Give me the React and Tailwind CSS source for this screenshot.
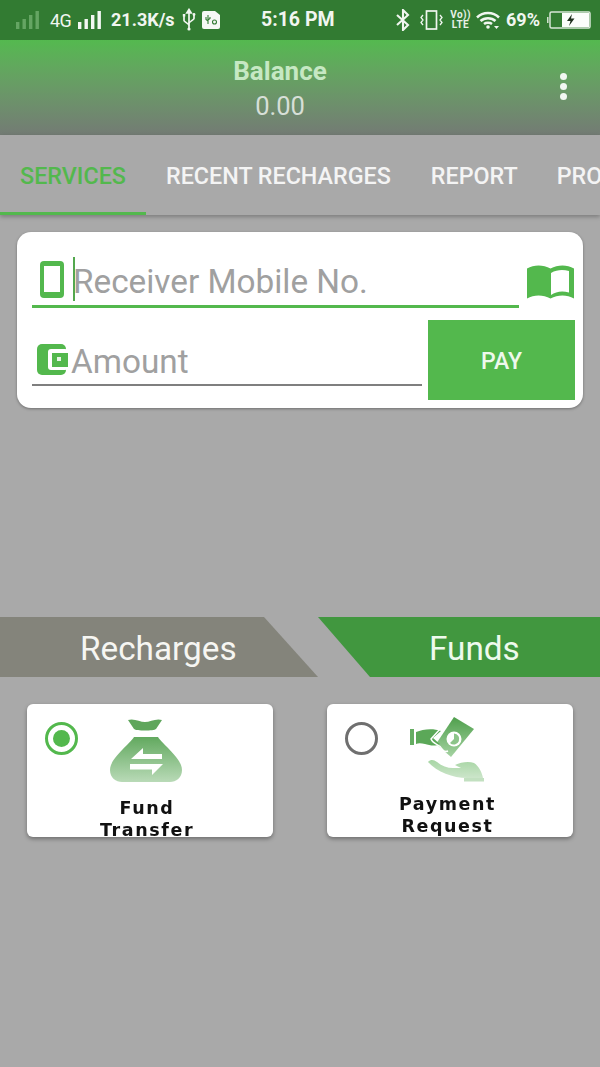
import React from "react";

const G = "#53b84d";

function Bars({ dim }) {
  return (
    <svg width="25" height="20" viewBox="0 0 25 20" className="shrink-0">
      <g fill={dim ? "#8fc98c" : "#f4f8f3"} opacity={dim ? 0.55 : 1}>
        <rect x="1" y="12" width="3.4" height="7" />
        <rect x="7.5" y="9" width="3.4" height="10" />
        <rect x="14" y="5" width="3.4" height="14" />
        <rect x="20.5" y="1" width="3.4" height="18" />
      </g>
    </svg>
  );
}

function StatusBar() {
  return (
    <div className="h-10 bg-[#327b32] flex items-center text-[#f1f6f0] overflow-hidden whitespace-nowrap">
      <div className="ml-[15px]"><Bars dim /></div>
      <span className="ml-[10px] w-[23px] text-[18px] leading-none tracking-[-0.5px] mt-[2px]">4G</span>
      <div className="ml-[4px]"><Bars /></div>
      <span className="ml-[9px] w-[67px] text-[18px] font-bold leading-none">21.3K/s</span>
      <svg width="14" height="24" viewBox="0 0 14 24" className="ml-[4px] shrink-0" fill="none" stroke="#f1f6f0" strokeWidth="1.7">
        <path d="M7 22V3M7 1.5 4.8 5h4.4z" fill="#f1f6f0" />
        <path d="M2 8v4.5c0 1.5 5 3 5 5M12 7v3.500c0 1.500-5 3-5 5" />
        <rect x="0.8" y="6" width="2.500" height="2.500" fill="#f1f6f0" stroke="none" />
        <circle cx="12" cy="6.500" r="1.400" fill="#f1f6f0" stroke="none" />
        <circle cx="7" cy="21" r="1.600" fill="#f1f6f0" stroke="none" />
      </svg>
      <svg width="18" height="18" viewBox="0 0 18 18" className="ml-[6px] shrink-0">
        <path d="M2 0h11l5 4v12a2 2 0 0 1-2 2H2a2 2 0 0 1-2-2V2a2 2 0 0 1 2-2z" fill="#f6f8f5" />
        <path d="M6 4v9M4 6v2.500l2 1.500M8 6v1.500l-2 1.500" stroke="#327b32" strokeWidth="1.100" fill="none" />
        <circle cx="12.500" cy="11" r="2" fill="none" stroke="#327b32" strokeWidth="1.100" />
      </svg>
      <span className="ml-[41px] w-[77px] text-[19.500px] font-bold leading-none">5:16 PM</span>
      <svg width="14" height="22" viewBox="0 0 14 22" className="ml-[58px] shrink-0" fill="none" stroke="#f1f6f0" strokeWidth="2.100">
        <path d="M1 6l11 10-5 5V1l5 5L1 16" />
      </svg>
      <svg width="23" height="20" viewBox="0 0 23 20" className="ml-[10px] shrink-0" fill="none" stroke="#f1f6f0" strokeWidth="1.700">
        <rect x="6.500" y="1" width="10" height="18" />
        <path d="M3 5l-2 2.500 2 2.500-2 2.500 2 2.500M20 5l2 2.500-2 2.500 2 2.500-2 2.500" strokeWidth="1.300" />
      </svg>
      <div className="ml-[8px] w-[19px] flex flex-col items-center text-[10px] font-bold leading-[10px] tracking-[0.4px] text-[#e8f1e7]">
        <span>Vo))</span>
        <span>LTE</span>
      </div>
      <svg width="24" height="18" viewBox="0 0 24 18" className="ml-[6px] shrink-0" fill="none" stroke="#f1f6f0" strokeWidth="2.500">
        <path d="M1 6.500c6-6 16-6 22 0M4.500 10c4-3.800 11-3.800 15 0M8 13c2-1.600 6-1.600 8 0" />
        <circle cx="12" cy="16" r="1.800" fill="#f1f6f0" stroke="none" />
        <path d="M18 15h5l-2.500 3z" fill="#f1f6f0" stroke="none" />
      </svg>
      <span className="ml-[6px] w-[36px] text-[18px] font-bold leading-none">69%</span>
      <svg width="44" height="18" viewBox="0 0 44 18" className="ml-[5px] shrink-0">
        <rect x="0" y="6" width="1.500" height="6" fill="#cfe0ce" />
        <rect x="3" y="1" width="40" height="16" rx="1.500" fill="none" stroke="#d8e6d7" strokeWidth="1.500" />
        <rect x="15" y="2" width="27" height="14" fill="#fbfdfb" />
        <path d="M25 3l-5 7h3.500l-1.500 5 5.500-7.500h-3.500z" fill="#20301f" />
      </svg>
    </div>
  );
}

function Header() {
  return (
    <div className="h-[95px] flex bg-gradient-to-b from-[#54b94f] to-[#737b74]">
      <div className="flex-1 flex flex-col items-center pt-[16px]">
        <span className="text-[26px] font-bold leading-[30px] text-[#c6e8c3]">Balance</span>
        <span className="text-[25.500px] leading-[30px] mt-[5px] text-[#d7dfd7]">0.00</span>
      </div>
      <div className="w-10 pr-[33px] flex flex-col items-end pt-[33px] gap-[3px]">
        <span className="w-[7px] h-[7px] shrink-0 rounded-full bg-[#f2f7f2]" />
        <span className="w-[7px] h-[7px] shrink-0 rounded-full bg-[#f2f7f2]" />
        <span className="w-[7px] h-[7px] shrink-0 rounded-full bg-[#f2f7f2]" />
      </div>
    </div>
  );
}

function Tabs() {
  return (
    <div className="h-20 flex bg-[#a9a9a9] shadow-[0_2px_4px_rgba(0,0,0,0.25)] overflow-hidden whitespace-nowrap text-[23.300px] font-medium text-[#f4f4f4]">
      <div className="w-[146px] shrink-0 h-full flex items-center justify-center pt-[5px] text-[#53b84d] border-b-[3px] border-[#53b84d]">SERVICES</div>
      <div className="ml-[20px] shrink-0 h-full flex items-center pt-[2px]">RECENT RECHARGES</div>
      <div className="ml-[40px] shrink-0 h-full flex items-center pt-[2px]">REPORT</div>
      <div className="ml-[39px] shrink-0 h-full flex items-center pt-[2px]">PROFILE</div>
    </div>
  );
}

function Form() {
  return (
    <div className="mx-[17px] mt-[17px] h-[176px] bg-white rounded-[14px] shadow-[0_1px_3px_rgba(0,0,0,0.35)] pt-[25px]">
      <div className="flex items-start pl-[15px]">
        <div className="w-[487px] h-[51px] border-b-[3px] border-[#53b84d] flex items-start">
          <svg width="24" height="37" viewBox="0 0 24 37" className="ml-[8px] mt-[4px] shrink-0">
            <rect x="0" y="0" width="24" height="37" rx="4" fill={G} />
            <rect x="4" y="5" width="16" height="26" fill="#fff" />
          </svg>
          <span className="ml-[9px] w-[2px] h-[44px] bg-[#53a84e] shrink-0" />
          <span className="ml-[-2px] mt-[1px] text-[33.300px] leading-[48px] text-[#a0a0a0] whitespace-nowrap">Receiver Mobile No.</span>
        </div>
        <svg width="47" height="34" viewBox="0 0 47 34" className="ml-[8px] mt-[8px] shrink-0">
          <path d="M0 3.500C7 -0.500 16 -0.500 23.500 3.500C31 -0.500 40 -0.500 47 3.500V33.500C40 29.500 31 29.500 23.500 33.500C16 29.500 7 29.500 0 33.500z" fill={G} />
          <path d="M24 8C30 4.500 36 4.500 42 6V27.500C35 25.500 29 26.500 24 30z" fill="#fff" />
        </svg>
      </div>
      <div className="flex items-start pl-[15px] mt-[12px]">
        <div className="w-[390px] h-[66px] border-b-[2px] border-[#7f7f7f] flex items-start">
          <svg width="31" height="31" viewBox="0 0 31 31" className="ml-[5px] mt-[24px] shrink-0">
            <rect x="0" y="0" width="29" height="31" rx="5" fill={G} />
            <rect x="11" y="5" width="20" height="21" rx="3" fill="#fff" />
            <rect x="15" y="9" width="16" height="14" fill={G} />
            <rect x="20" y="13" width="4" height="4" fill="#e6f5e4" />
          </svg>
          <span className="ml-[3px] mt-[18px] text-[33.300px] leading-[48px] text-[#a0a0a0]">Amount</span>
        </div>
        <button className="ml-[6px] w-[147px] h-20 pt-[4px] bg-[#53b84d] text-[#eef8ed] text-[23px] font-medium">PAY</button>
      </div>
    </div>
  );
}

function Switcher() {
  return (
    <div className="mt-[209px] h-[60px] flex text-[33.300px] leading-none">
      <div className="w-[318px] h-full pt-[3px] bg-[#84847b] [clip-path:polygon(0_0,264px_0,318px_100%,0_100%)] flex items-center pl-[80px] text-[#f6f6f2]">
        Recharges
      </div>
      <div className="w-[282px] h-full pt-[3px] bg-[#41973f] [clip-path:polygon(0_0,100%_0,100%_100%,52px_100%)] flex items-center pl-[111px] text-[#eefaed]">
        Funds
      </div>
    </div>
  );
}

function Bag() {
  return (
    <svg width="72" height="65" viewBox="0 0 72 65" className="shrink-0">
      <defs>
        <linearGradient id="bag" x1="0" y1="0" x2="0" y2="1">
          <stop offset="0" stopColor="#62a95f" />
          <stop offset="1" stopColor="#b9dab7" />
        </linearGradient>
      </defs>
      <path d="M18 2C24 0 30 4 35 4C40 4 46 0 52 2L46 11C44 13 26 13 24 11z" fill="#5fa65c" />
      <path d="M24 19H48C52 26 72 40 72 52C72 60 66 64 60 64H12C6 64 0 60 0 52C0 40 20 26 24 19z" fill="url(#bag)" />
      <path d="M21 41L33 30V36H52V41z" fill="#fff" />
      <path d="M20 46H53L42 57V51.500H20z" fill="#fff" />
    </svg>
  );
}

function Pay() {
  return (
    <svg width="76" height="67" viewBox="0 0 76 67" className="shrink-0">
      <defs>
        <linearGradient id="note" x1="0" y1="0" x2="0" y2="1">
          <stop offset="0" stopColor="#4f9f4c" />
          <stop offset="1" stopColor="#a5d3a2" />
        </linearGradient>
        <linearGradient id="palm" x1="0" y1="0" x2="0" y2="1">
          <stop offset="0" stopColor="#a8d6a5" />
          <stop offset="1" stopColor="#cce5ca" />
        </linearGradient>
      </defs>
      <path d="M45 1L65 13L42 41L27 28z" fill="url(#note)" />
      <circle cx="45" cy="23" r="7.500" fill="#fff" />
      <path d="M45 17.500a5.500 5.500 0 1 1-4 9.500l4-4z" fill="#8cc489" />
      <rect x="1" y="13" width="4" height="16" fill="#65ad62" />
      <path d="M7 16C14 13 24 12 32 15L24 22C27 24 29 27 31 28C26 31 20 29 16 28C12 27 9 27 7 28z" fill="#5ba858" />
      <path d="M32 12L22 23C24 29 30 27 33 33C35 36 37 36 39 35" fill="none" stroke="#fff" strokeWidth="1.400" />
      <path d="M19 46C22 43 25 44 28 46C33 50 38 52 44 52H52L46 49C52 46 60 45 65 47C70 50 73 57 74 62H58C44 62 28 56 19 46z" fill="url(#palm)" />
      <rect x="55" y="62" width="20" height="3.500" fill="#c2e0c0" />
    </svg>
  );
}

function Choice({ selected, icon, lines, iconClass, textClass }) {
  return (
    <div className="w-[246px] h-[133px] bg-white rounded-[6px] shadow-[0_2px_4px_rgba(0,0,0,0.35)] relative flex flex-col items-center">
      <span className={"absolute left-[18px] top-[18px] w-[33px] h-[33px] rounded-full border-[3px] flex items-center justify-center " + (selected ? "border-[#53b84d]" : "border-[#6f6f6f]")}>
        {selected && <span className="w-[17px] h-[17px] rounded-full bg-[#53b84d]" />}
      </span>
      <div className={"blur-[0.4px] " + iconClass}>{icon}</div>
      <div className={"blur-[0.3px] flex flex-col items-center font-['DejaVu_Sans'] font-bold text-[17.500px] leading-[22px] tracking-[1.600px] text-[#111]" + " " + textClass}>
        {lines.map((l) => <span key={l}>{l}</span>)}
      </div>
    </div>
  );
}

export default function App() {
  return (
    <div className="w-[600px] h-[1067px] overflow-hidden bg-[#a9a9a9] font-['Roboto',sans-serif]">
      <StatusBar />
      <Header />
      <Tabs />
      <Form />
      <Switcher />
      <div className="mt-[27px] pl-[27px] flex gap-[54px]">
        <Choice selected icon={<Bag />} lines={["Fund", "Transfer"]} iconClass="ml-[-8px] mt-[14px]" textClass="ml-[-6px] mt-[14px]" />
        <Choice icon={<Pay />} lines={["Payment", "Request"]} iconClass="ml-[-6px] mt-[12px]" textClass="ml-[-5px] mt-[10px]" />
      </div>
    </div>
  );
}
